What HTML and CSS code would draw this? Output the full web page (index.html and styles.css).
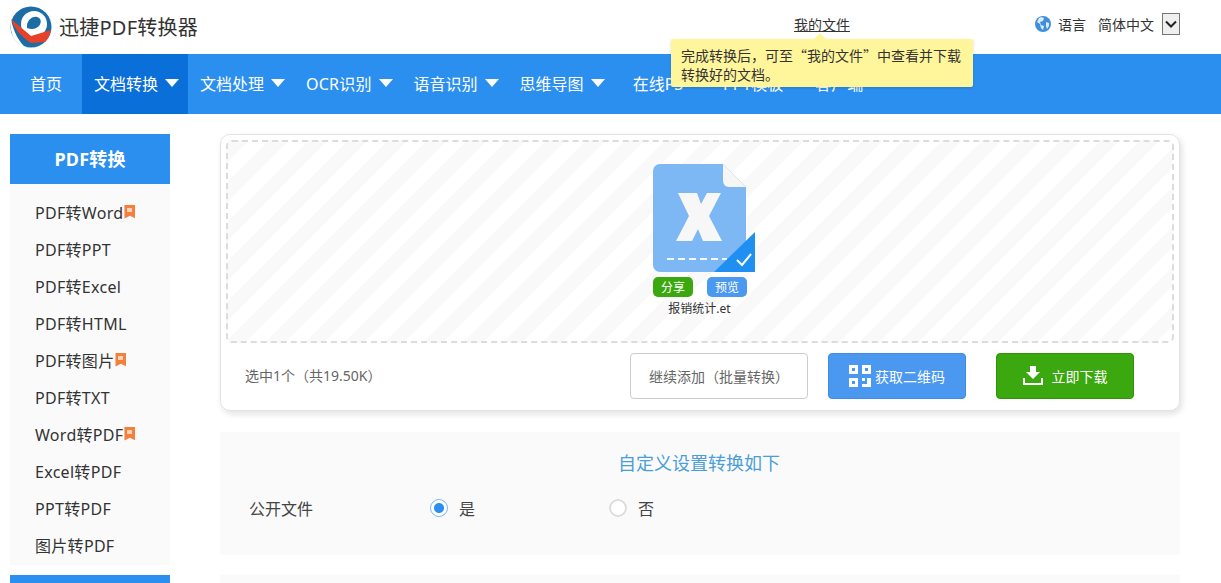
FILE: index.html
```html
<!DOCTYPE html>
<html lang="zh-CN">
  <head>
    <title>迅捷PDF转换器</title>
    <meta charset="utf-8">
    <link rel="stylesheet" href="styles.css">
  </head>
  <body>
    <header class="top">
      <a class="brand">
        <svg class="logo" width="42" height="42" viewBox="0 0 42 42">
          <circle cx="21" cy="21" r="20.5" fill="#1c6da6"/>
          <circle cx="24" cy="18" r="13" fill="#fff"/>
          <path d="M17 19c1-6 6-9 10-8 4 1 5 5 2 9-3 3-7 4-12 2z" fill="#1c6da6"/>
          <path d="M1 13l20 17 20-6c-1 5-3 9-6 12l-14 1C12 31 5 24 1 13z" fill="#e8412a"/>
          <path d="M1 14c3 12 7 20 13 26l3 1C12 41 6 37 3 31 1 26 0 20 1 14z" fill="#fff"/>
        </svg>
        <span class="brand-name">迅捷PDF转换器</span>
      </a>
      <div class="my-files">
        <a class="my-files-link">我的文件</a>
        <div class="tip">完成转换后，可至“我的文件”中查看并下载<br>转换好的文档。</div>
      </div>
      <div class="lang">
        <svg class="globe" width="16" height="16" viewBox="0 0 16 16">
          <circle cx="8" cy="8" r="8" fill="#3f8fdc"/>
          <path d="M6 1l3 1-1 3-3 1 1 3 3 1-1 4-2-2-1-4-3-2 2-4z" fill="#dcecfa"/>
          <path d="M11 6l3 1 0 3-2 3-1-3z" fill="#dcecfa"/>
        </svg>
        <span class="lang-label">语言</span>
        <span class="lang-current">简体中文</span>
        <span class="lang-select">
          <svg width="12" height="8" viewBox="0 0 12 8"><path d="M1 1.500L6 6.500l5-5" fill="none" stroke="#222" stroke-width="2"/></svg>
        </span>
      </div>
    </header>

    <nav class="nav">
      <a class="nav-item nav-home">首页</a>
      <a class="nav-item active">文档转换<i class="caret"></i></a>
      <a class="nav-item">文档处理<i class="caret"></i></a>
      <a class="nav-item nav-ocr">OCR识别<i class="caret"></i></a>
      <a class="nav-item">语音识别<i class="caret"></i></a>
      <a class="nav-item">思维导图<i class="caret"></i></a>
      <a class="nav-item nav-ps">在线PS</a>
      <a class="nav-item nav-ppt">PPT模板</a>
      <a class="nav-item nav-client">客户端<i class="caret"></i></a>
    </nav>

    <div class="page">
      <aside class="side">
        <h3 class="side-title">PDF转换</h3>
        <ul class="side-list">
          <li>PDF转Word<i class="medal"></i></li>
          <li>PDF转PPT</li>
          <li>PDF转Excel</li>
          <li>PDF转HTML</li>
          <li>PDF转图片<i class="medal"></i></li>
          <li>PDF转TXT</li>
          <li>Word转PDF<i class="medal"></i></li>
          <li>Excel转PDF</li>
          <li>PPT转PDF</li>
          <li>图片转PDF</li>
        </ul>
        <div class="side-next"></div>
      </aside>

      <main class="main">
        <section class="card">
          <div class="drop">
            <div class="file">
              <svg class="file-icon" width="102" height="108" viewBox="0 0 102 108">
                <path d="M7 0h63l23 23v78a7 7 0 0 1-7 7H7a7 7 0 0 1-7-7V7a7 7 0 0 1 7-7z" fill="#7db8f5"/>
                <path d="M70 0l23 23H76a6 6 0 0 1-6-6z" fill="#f6f6f6"/>
                <path d="M25 29h19l4 11 6-11h14L56 52l13 25H50l-5-12-6 12H23l13-25z" fill="#f7f7f7"/>
                <path d="M14 95h60" stroke="#f2f7fd" stroke-width="2" stroke-dasharray="7 4" fill="none"/>
                <path d="M102 68v40H61z" fill="#1f8ff2"/>
                <path d="M84 96l5 5 9-11" fill="none" stroke="#fff" stroke-width="2"/>
              </svg>
              <div class="file-actions">
                <span class="pill pill-share">分享</span>
                <span class="pill pill-view">预览</span>
              </div>
              <div class="file-name">报销统计.et</div>
            </div>
          </div>
          <div class="card-foot">
            <span class="count">选中1个（共19.50K）</span>
            <a class="btn btn-add">继续添加（批量转换）</a>
            <a class="btn btn-qr">
              <svg width="22" height="22" viewBox="0 0 22 22" fill="#fff">
                <path d="M0 0h9v9H0zM3 3v3h3V3zM13 0h9v9h-9zM16 3v3h3V3zM0 13h9v9H0zM3 16v3h3v-3z" fill-rule="evenodd"/>
                <path d="M18 13h4v9h-9v-3h5zM13 13h3v3h-3z"/>
              </svg>
              获取二维码
            </a>
            <a class="btn btn-down">
              <svg width="20" height="19" viewBox="0 0 20 19" fill="#fff">
                <path d="M7 0h6v6h4l-7 7-7-7h4z"/>
                <path d="M0 12h2v5h16v-5h2v7H0z"/>
              </svg>
              立即下载
            </a>
          </div>
        </section>

        <section class="settings">
          <h4 class="settings-title">自定义设置转换如下</h4>
          <div class="opt-row">
            <span class="opt-label">公开文件</span>
            <label class="radio radio-yes"><i class="dot on"></i>是</label>
            <label class="radio"><i class="dot"></i>否</label>
          </div>
        </section>
        <section class="settings-next"></section>
      </main>
    </div>
  </body>
</html>
```

FILE: styles.css
```css
html, body {
  margin: 0;
  height: 583px;
  overflow: hidden;
}
body {
  background: #fff;
  color: #333;
  font-family: "Noto Sans", "Noto Sans CJK SC", sans-serif;
  font-size: 14px;
}
a {
  color: inherit;
  text-decoration: none;
}
ul, h3, h4 {
  margin: 0;
  padding: 0;
  font-weight: normal;
}

/* top bar */
.top {
  display: flex;
  align-items: center;
  height: 54px;
  padding: 0 41px 0 10px;
}
.brand {
  display: flex;
  align-items: center;
  gap: 7px;
  width: 784px;
}
.logo {
  flex: none;
}
.brand-name {
  padding-bottom: 2px;
  font-size: 20px;
  letter-spacing: 0.25px;
  color: #333;
}
.my-files {
  position: relative;
  padding-bottom: 6px;
}
.my-files-link {
  font-size: 14px;
  color: #333;
  text-decoration: underline;
}
.tip {
  position: absolute;
  z-index: 2;
  top: 25px;
  left: -123px;
  width: 280px;
  padding: 7px 12px 3px 10px;
  background: #fff59b;
  border-radius: 2px;
  box-shadow: 0 1px 3px rgba(0, 0, 0, 0.15);
  font-family: "Noto Sans CJK SC", sans-serif;
  font-size: 14px;
  line-height: 19px;
  color: #333;
  white-space: nowrap;
}
.tip::before {
  content: "";
  position: absolute;
  top: -6px;
  left: 143px;
  border: 6px solid transparent;
  border-top: 0;
  border-bottom-color: #fff59b;
}
.lang {
  display: flex;
  align-items: center;
  margin-left: auto;
  padding-bottom: 6px;
  font-size: 14px;
  color: #333;
}
.globe {
  margin: 0 0 0 1px;
}
.lang-label {
  margin-left: 7px;
}
.lang-current {
  margin-left: 12px;
}
.lang-select {
  display: flex;
  align-items: center;
  justify-content: center;
  width: 16px;
  height: 20px;
  margin-left: 8px;
  border: 1px solid #767676;
  background: #efefef;
}

/* main menu */
.nav {
  display: flex;
  height: 60px;
  background: #2b8ff0;
  color: #fff;
  font-size: 16px;
}
.nav-item {
  display: flex;
  align-items: center;
  padding: 0 9px 2px 12px;
  white-space: nowrap;
}
.nav-home {
  width: 82px;
  box-sizing: border-box;
  padding: 0 0 2px 30px;
}
.nav-item.active {
  background: #0a6fd8;
}
.nav-ocr {
  letter-spacing: 0.2px;
}
.nav-ps {
  padding-left: 19px;
  padding-right: 0;
}
.nav-ppt {
  padding-left: 40px;
  padding-right: 0;
}
.nav-client {
  padding-left: 32px;
}
.caret {
  flex: none;
  width: 0;
  height: 0;
  margin-left: 7px;
  border-left: 7.500px solid transparent;
  border-right: 7.500px solid transparent;
  border-top: 8px solid #fff;
}

/* page columns */
.page {
  display: flex;
  align-items: flex-start;
  gap: 50px;
  padding: 20px 0 0 10px;
}
.side {
  width: 160px;
  flex: none;
}
.side-title {
  height: 50px;
  background: #2b8ff0;
  color: #fff;
  font-size: 18px;
  font-weight: bold;
  letter-spacing: 0.2px;
  line-height: 50px;
  text-align: center;
}
.side-list {
  padding: 9px 0 2px 25px;
  margin-bottom: 10px;
  background: #fafafa;
  list-style: none;
}
.side-list li {
  display: flex;
  align-items: center;
  height: 37px;
  font-size: 16px;
  letter-spacing: 0.3px;
  color: #333;
}
.side-next {
  height: 8px;
  background: #2b8ff0;
}
.medal {
  position: relative;
  width: 11px;
  height: 14px;
  margin-left: 1px;
  background: #f5803e;
  clip-path: polygon(0 0, 100% 0, 100% 100%, 50% 80%, 0 100%);
}
.medal::after {
  content: "";
  position: absolute;
  top: 3px;
  left: 3px;
  width: 5px;
  height: 4px;
  background: #fbd3b8;
}
.main {
  width: 960px;
  flex: none;
}

/* upload card */
.card {
  box-sizing: border-box;
  height: 277px;
  padding: 5px;
  border: 1px solid #e3e3e3;
  border-radius: 10px;
  box-shadow: 2px 3px 6px rgba(0, 0, 0, 0.12);
}
.drop {
  box-sizing: border-box;
  display: flex;
  justify-content: center;
  height: 203px;
  padding-top: 22px;
  border: 2px dashed #dcdcdc;
  border-radius: 6px;
  background: repeating-linear-gradient(135deg, #f9f9f9 0, #f9f9f9 14px, #fff 14px, #fff 28px);
}
.file {
  display: flex;
  flex-direction: column;
  width: 102px;
  margin-left: 8px;
}
.file-icon {
  display: block;
}
.file-actions {
  display: flex;
  gap: 14px;
  margin-top: 5px;
}
.pill {
  width: 40px;
  height: 20px;
  border-radius: 5px;
  color: #fff;
  font-size: 12px;
  line-height: 21px;
  text-align: center;
}
.pill-share {
  background: #3aa80e;
}
.pill-view {
  background: #4a98f0;
}
.file-name {
  width: 93px;
  margin-top: 3px;
  font-size: 12px;
  line-height: 18px;
  text-align: center;
  white-space: nowrap;
  color: #333;
}
.card-foot {
  display: flex;
  align-items: center;
  height: 46px;
  margin-top: 10px;
  padding: 0 40px 0 19px;
}
.count {
  margin-right: auto;
  padding-bottom: 2px;
  font-size: 14px;
  color: #666;
}
.btn {
  box-sizing: border-box;
  display: flex;
  align-items: center;
  justify-content: center;
  height: 46px;
  padding-bottom: 1px;
  border-radius: 4px;
  font-size: 14px;
}
.btn-add {
  width: 178px;
  border: 1px solid #ccc;
  color: #666;
}
.btn-qr {
  width: 138px;
  margin-left: 20px;
  gap: 4px;
  border: 1px solid #3f8be6;
  background: #4a98f0;
  color: #fff;
}
.btn-down {
  width: 138px;
  margin-left: 30px;
  gap: 9px;
  border: 1px solid #2f9309;
  background: #3aa80e;
  color: #fff;
}

/* conversion options */
.settings {
  box-sizing: border-box;
  height: 123px;
  margin-top: 21px;
  padding-top: 19px;
  background: #fafafa;
}
.settings-next {
  height: 8px;
  margin-top: 20px;
  background: #fafafa;
}
.settings-title {
  padding-right: 2px;
  font-size: 18px;
  line-height: 24px;
  color: #4a9fd8;
  text-align: center;
}
.opt-row {
  display: flex;
  align-items: center;
  height: 24px;
  margin-top: 21px;
  padding-left: 29px;
  font-size: 16px;
  color: #444;
}
.opt-label {
  width: 181px;
}
.radio {
  display: flex;
  align-items: center;
  gap: 11px;
}
.radio-yes {
  width: 179px;
}
.dot {
  box-sizing: border-box;
  width: 18px;
  height: 18px;
  border: 2px solid #ddd;
  border-radius: 50%;
  background: #fff;
}
.dot.on {
  border: 1px solid #7fb6ee;
  background: radial-gradient(circle, #2b8ff0 0, #2b8ff0 4.500px, #fff 5.500px);
}
```
